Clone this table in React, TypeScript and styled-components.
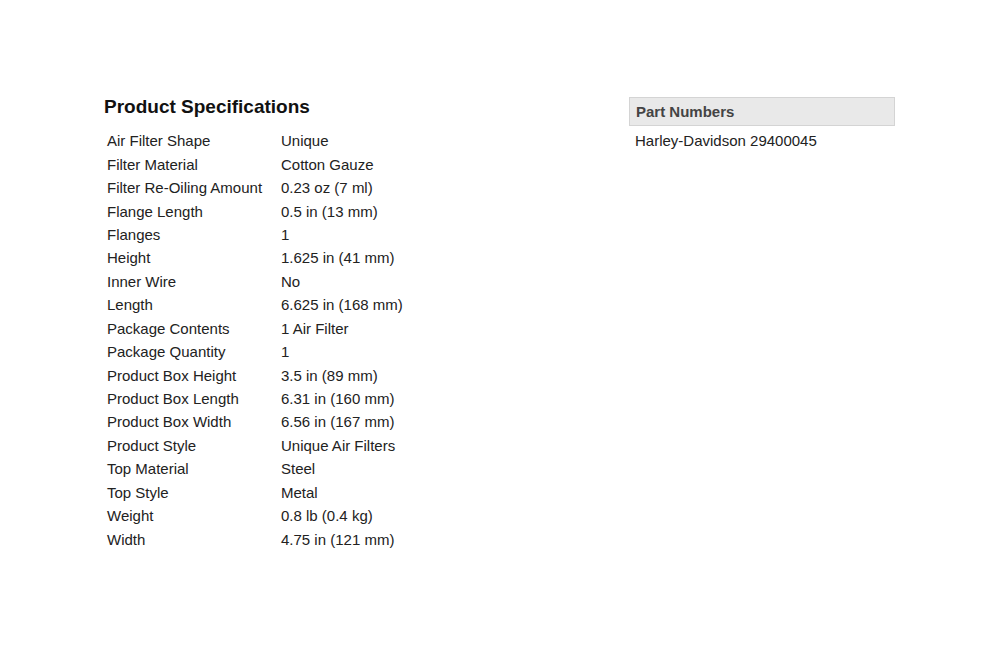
import styled, { createGlobalStyle } from 'styled-components'

const specs: [string, string][] = [
  ['Air Filter Shape', 'Unique'],
  ['Filter Material', 'Cotton Gauze'],
  ['Filter Re-Oiling Amount', '0.23 oz (7 ml)'],
  ['Flange Length', '0.5 in (13 mm)'],
  ['Flanges', '1'],
  ['Height', '1.625 in (41 mm)'],
  ['Inner Wire', 'No'],
  ['Length', '6.625 in (168 mm)'],
  ['Package Contents', '1 Air Filter'],
  ['Package Quantity', '1'],
  ['Product Box Height', '3.5 in (89 mm)'],
  ['Product Box Length', '6.31 in (160 mm)'],
  ['Product Box Width', '6.56 in (167 mm)'],
  ['Product Style', 'Unique Air Filters'],
  ['Top Material', 'Steel'],
  ['Top Style', 'Metal'],
  ['Weight', '0.8 lb (0.4 kg)'],
  ['Width', '4.75 in (121 mm)'],
]

const GlobalStyle = createGlobalStyle`
  html, body {
    margin: 0;
    padding: 0;
    background: #ffffff;
  }
  body {
    font-family: "Liberation Sans", Arial, sans-serif;
    color: #222222;
  }
`

export default function App() {
  return (
    <>
      <GlobalStyle />
      <Page>
        <SpecSection>
          <Title>Product Specifications</Title>
          <SpecTable>
            <tbody>
              {specs.map(([label, value]) => (
                <tr key={label}>
                  <Label>{label}</Label>
                  <Value>{value}</Value>
                </tr>
              ))}
            </tbody>
          </SpecTable>
        </SpecSection>
        <PartSection>
          <PartHeader>Part Numbers</PartHeader>
          <PartItem>Harley-Davidson 29400045</PartItem>
        </PartSection>
      </Page>
    </>
  )
}

const Page = styled.div`
  display: flex;
  align-items: flex-start;
  width: 1000px;
  height: 650px;
  box-sizing: border-box;
  padding: 97px 0 0 104px;
`

const SpecSection = styled.section`
  width: 525px;
`

const Title = styled.h2`
  margin: 0 0 12px;
  font-size: 19px;
  line-height: 20px;
  font-weight: bold;
  color: #111111;
`

const SpecTable = styled.table`
  border-collapse: collapse;
  margin-left: 3px;
  font-size: 15px;
  color: #222222;

  td {
    padding: 0;
    height: 23.45px;
    line-height: 17px;
    vertical-align: middle;
    white-space: nowrap;
  }
`

const Label = styled.td`
  width: 174px;
`

const Value = styled.td``

const PartSection = styled.section`
  width: 266px;
`

const PartHeader = styled.div`
  box-sizing: border-box;
  height: 29px;
  padding: 0 6px;
  display: flex;
  align-items: center;
  background: #e9e9e9;
  border: 1px solid #d4d4d4;
  font-size: 15px;
  font-weight: bold;
  color: #444444;
`

const PartItem = styled.div`
  padding: 6px 6px 0;
  font-size: 15px;
  line-height: 17px;
  color: #222222;
`
